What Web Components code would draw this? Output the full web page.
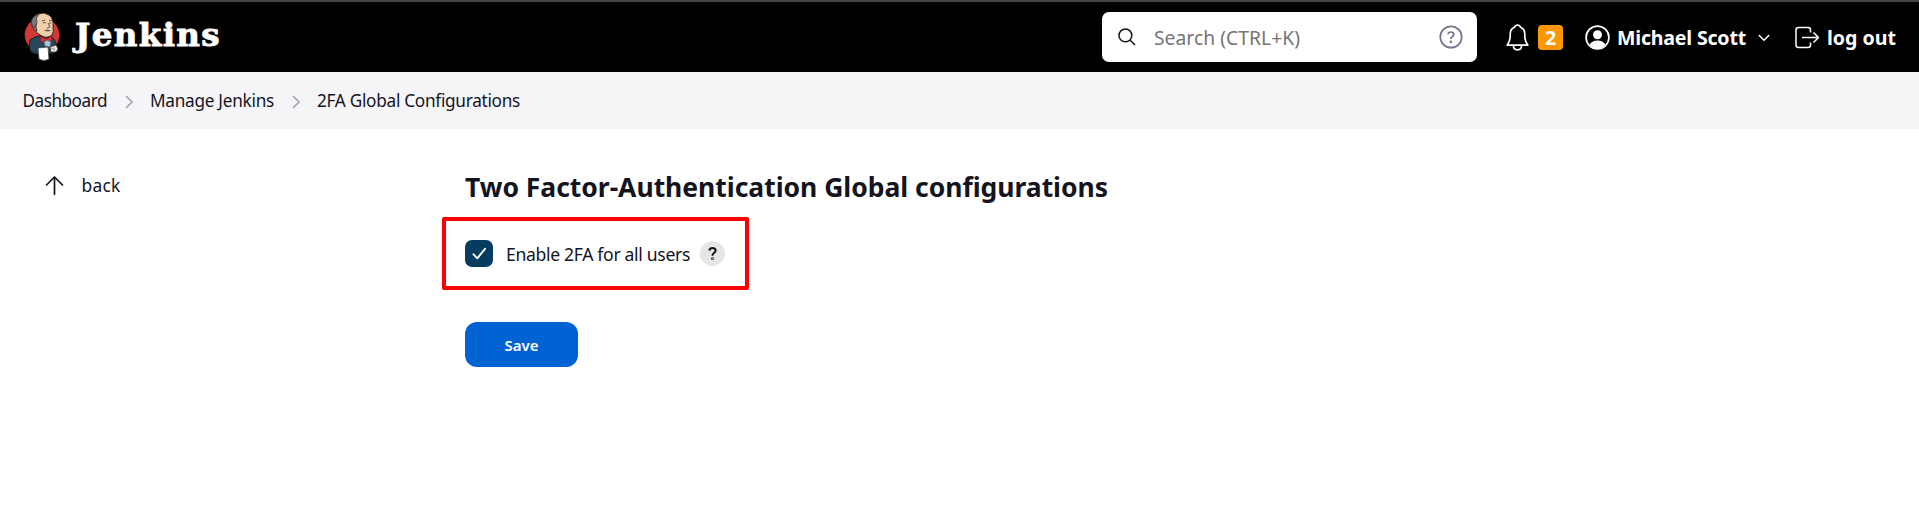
<!DOCTYPE html>
<html lang="en"><head><meta charset="utf-8"><title>2FA Global Configurations [Jenkins]</title>
<style>html,body{margin:0;height:100%;background:#fff;font-family:"Noto Sans","Open Sans",sans-serif;color:#14141f;overflow:hidden}</style></head>
<body>
<jenkins-page>
<page-header slot="header"></page-header>
<bread-crumbs slot="crumbs"></bread-crumbs>
<side-panel slot="side"></side-panel>
<config-form slot="main"></config-form>
</jenkins-page>
<script>
const define=(name,html)=>customElements.define(name,class extends HTMLElement{
 constructor(){super();this.attachShadow({mode:'open'}).innerHTML=html}
});
// A single line of text justified to a given width in pixels through its tracking.
customElements.define('text-line',class extends HTMLElement{
 constructor(){super();this.attachShadow({mode:'open'}).innerHTML='<style>:host{display:block;white-space:nowrap;flex:none}span{display:inline-block}</style><span><slot></slot></span>'}
 connectedCallback(){
  const s=this.shadowRoot.querySelector('span'),w=+this.getAttribute('w');
  this.style.width=w+'px';
  s.style.letterSpacing=((w-s.getBoundingClientRect().width)/(this.textContent.length))+'px';
 }
});
define('jenkins-page',`<style>:host{display:block}main{display:flex}</style>
<slot name="header"></slot><slot name="crumbs"></slot><main><slot name="side"></slot><slot name="main"></slot></main>`);
define('jenkins-logo',`<style>:host{display:block;width:36px;height:50px;flex:none}svg{display:block}</style>
<svg width="36" height="50" viewBox="0 0 36 50">
<circle cx="18" cy="23" r="17.3" fill="#d33833"/>
<path d="M6 28Q11 24 16 24L26 25Q31 26 32 32L34 38L30 41L12 42L7 40Q4 34 6 28Z" fill="#24475a" stroke="#17212a" stroke-width="1"/>
<path d="M8 14Q6 5 14 2Q20-.5 25 3Q30 7 29 15Q30 20 28 23Q23 27 18 24Q13 22 11 18Z" fill="#efd0aa" stroke="#30251e" stroke-width="1"/>
<path d="M9 15Q5 8 11 4L15 2Q11 6 13 10L12 15L13 19L10 18Z" fill="#777880" stroke="#302d31" stroke-width=".7"/>
<path d="M18 9l3-1M25 8l3 1M19 11q2-1 3 0M25 11h2M24 11l2 4-3 1M12 13q-2 0-1 3" fill="none" stroke="#47362b" stroke-width=".8"/>
<path d="M20 18.5q3-2 7 0q-3 2-7 0Z" fill="#6e6159"/>
<path d="M16 24L22 27 28 24V30L23 28 17 31Z" fill="#e32c34" stroke="#671c27" stroke-width=".7"/>
<path d="M20 30l3-2 4 2-1 5-5-1Z" fill="#a9c2d1" stroke="#4b6c7d" stroke-width=".7"/>
<path d="M14 36L24 35 25 47Q20 50 15 47Z" fill="#fff" stroke="#444" stroke-width=".8"/>
<path d="M26 35L32 33 34 37 32 40 27 40Z" fill="#f5eee8" stroke="#333" stroke-width=".8"/><path d="M27 36l4 2m-1-3v3" stroke="#777" stroke-width=".7"/>
</svg>`);
define('search-box',`<style>:host{display:flex;box-sizing:border-box;width:375px;height:50px;background:#fff;border-radius:7px;align-items:center;padding:0 14px 0 16px;font-size:19.3px;font-weight:400;line-height:28px;color:#757575;flex:none}
.m{margin:-1px 18px 0 0}.q{margin-left:auto}text-line{margin-top:1px}</style>
<svg class="m" width="18" height="18" viewBox="0 0 18 18" fill="none" stroke="#14141f" stroke-width="1.5"><circle cx="7.4" cy="7.4" r="6.4"/><path d="M12 12L17 17"/></svg>
<text-line w="146">Search (CTRL+K)</text-line>
<svg class="q" width="24" height="24" viewBox="0 0 24 24" fill="none" stroke="#73738c" stroke-width="1.7"><circle cx="12" cy="12" r="10.7"/><path d="M9.1 9.3Q9.2 7 11.8 7Q14.8 7 14.8 9.4Q14.8 10.8 13.1 11.8Q11.8 12.5 11.8 14"/><circle cx="11.8" cy="16.9" r=".5"/></svg>`);
define('page-header',`<style>:host{display:flex;box-sizing:border-box;height:72px;background:#000;border-top:2px solid #444;color:#fff;align-items:flex-start;padding-left:24px;font-size:19.6px;font-weight:700;line-height:28px}
jenkins-logo{margin-top:10px}.name{font:bold 32.5px/40px "DejaVu Serif",serif;-webkit-text-stroke:.9px #fff;margin:13px 0 0 15px}search-box{margin:10px 0 0 auto}
svg{display:block;flex:none}.bell{margin:22px 9px 0 29px}.badge{width:25px;height:25px;line-height:25px;text-align:center;background:#ff9800;border-radius:4px;margin:23px 22px 0 0}
.person{margin:23px 7px 0 0}text-line{margin-top:22px}.chev{margin:32px 25px 0 12px}.exit{margin:24px 7px 0 0}.out{margin-right:23px}</style>
<jenkins-logo></jenkins-logo><text-line class="name" w="146">Jenkins</text-line><search-box></search-box>
<svg class="bell" width="23" height="27" viewBox="0 0 23 27" fill="none" stroke="#fff" stroke-width="1.7" stroke-linejoin="round" stroke-linecap="round"><path d="M1.2 21.2Q4.2 16.5 4.2 13V10Q4.2 5 8.5 3.3Q9.2 1 11.5 1T14.5 3.3Q18.8 5 18.8 10V13Q18.8 16.5 21.8 21.2ZM7.5 21.5V22Q7.5 25.8 11.5 25.8T15.5 22V21.5"/></svg>
<div class="badge">2</div>
<svg class="person" width="25" height="25" viewBox="0 0 25 25"><circle cx="12.5" cy="12.5" r="11.4" fill="none" stroke="#fff" stroke-width="1.7"/><circle cx="12.5" cy="9.7" r="4.5" fill="#fff"/><path d="M4.7 19.2Q7.2 15.4 12.5 15.4T20.3 19.2Q17 23.6 12.5 23.6T4.7 19.2Z" fill="#fff"/></svg>
<text-line w="129">Michael Scott</text-line>
<svg class="chev" width="12" height="8" viewBox="0 0 12 8" fill="none" stroke="#fff" stroke-width="1.5"><path d="M.8 1L6 6.3 11.2 1"/></svg>
<svg class="exit" width="25" height="23" viewBox="0 0 25 23" fill="none" stroke="#fff" stroke-width="1.5" stroke-linejoin="round"><path d="M15.5 6.5V4Q15.5 1.5 13 1.5H3.5Q1 1.5 1 4V19Q1 21.5 3.5 21.5H13Q15.5 21.5 15.5 19V16.5M7 11.5H23M18.5 6.5L23.5 11.5 18.5 16.5"/></svg>
<text-line class="out" w="69">log out</text-line>`);
define('bread-crumbs',`<style>:host{display:flex;box-sizing:border-box;height:57px;background:#f5f5f8;padding:16px 0 0 22.5px;font-size:17.2px;line-height:26px}svg{margin:7px 17.5px 0 17.5px;flex:none}</style>
<text-line w="84.5">Dashboard</text-line><svg width="8" height="14" viewBox="0 0 8 14" fill="none" stroke="#a6a6b8" stroke-width="1.7"><path d="M1 1L7 7 1 13"/></svg>
<text-line w="124">Manage Jenkins</text-line><svg width="8" height="14" viewBox="0 0 8 14" fill="none" stroke="#a6a6b8" stroke-width="1.7"><path d="M1 1L7 7 1 13"/></svg>
<text-line w="203">2FA Global Configurations</text-line>`);
define('side-panel',`<style>:host{display:flex;box-sizing:border-box;width:442px;padding:43px 0 0 44.5px;font-size:17.4px;line-height:26px;align-items:flex-start}svg{margin:4px 18px 0 0}</style>
<svg width="19" height="20" viewBox="0 0 19 20" fill="none" stroke="#14141f" stroke-width="1.7" stroke-linecap="round" stroke-linejoin="round"><path d="M1.5 9L9.5 1 17.5 9M9.5 1V18.3"/></svg><text-line w="39">back</text-line>`);
define('check-box',`<style>:host{display:block;width:28px;height:27px;border-radius:7px;background:#063c5f;flex:none}svg{display:block}</style>
<svg width="28" height="27" viewBox="0 0 28 27" fill="none" stroke="#fff" stroke-width="1.9" stroke-linecap="round" stroke-linejoin="round"><path d="M8.5 14.3L12.3 18.3 20 8.8"/></svg>`);
define('help-badge',`<style>:host{display:block;width:25px;height:25px;border-radius:50%;background:#e6e6e6;flex:none}svg{display:block}</style>
<svg width="25" height="25" viewBox="0 0 25 25" fill="none" stroke="#14141f" stroke-width="2"><path d="M9.4 9.6Q9.5 7 12.5 7Q15.6 7 15.6 9.5Q15.6 11 13.9 12Q12.5 12.8 12.5 14.8"/><circle cx="12.5" cy="17.7" r=".4"/></svg>`);
define('config-form',`<style>:host{display:block}h1{font-size:26.5px;line-height:40px;margin:38px 0 0 23px;font-weight:700}
.box{display:flex;align-items:flex-start;box-sizing:border-box;width:307px;height:73px;border:4px solid #f00;border-radius:2px;margin-top:10px;padding:19px 0 0 19px;font-size:17.6px;line-height:26px}
.box text-line{margin:1px 10px 0 13px}help-badge{margin-top:1px}
button{display:flex;align-items:center;justify-content:center;width:113px;height:45px;border:0;border-radius:12px;background:#0062d3;color:#fff;font:600 15px/20px "Noto Sans",sans-serif;margin:32px 0 0 23px;padding:0}</style>
<h1><text-line w="643">Two Factor-Authentication Global configurations</text-line></h1>
<div class="box"><check-box></check-box><text-line w="184">Enable 2FA for all users</text-line><help-badge></help-badge></div>
<button><text-line w="34">Save</text-line></button>`);
</script>
</body></html>
